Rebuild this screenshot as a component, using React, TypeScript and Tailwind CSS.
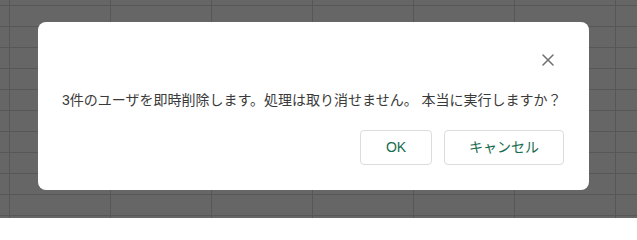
const font = "font-['Liberation_Sans','Noto_Sans_CJK_JP',sans-serif]";

const ConfirmDialog = () => {
  return (
    <div className={`flex h-[168px] w-[551px] flex-col rounded-lg bg-white px-6 ${font}`}>
      <div className="flex justify-end pr-[11px] pt-[32px]">
        <button className="text-[#6f6f6f]">
          <svg width="12" height="12" viewBox="0 0 12 12" fill="none" stroke="currentColor" strokeWidth="1.5" strokeLinecap="round">
            <path d="M1 1l10 10M11 1L1 11" />
          </svg>
        </button>
      </div>
      <p className="mt-[24px] text-[14px] leading-5 text-[#3a3a3a]">
        3件のユーザを即時削除します。処理は取り消せません。 本当に実行しますか？
      </p>
      <div className="mt-[20px] flex justify-end gap-3 pr-px">
        <button className="h-[35px] w-[72px] rounded-[4px] border border-[#dcdcdc] text-[14px] text-[#176b4d]">
          OK
        </button>
        <button className="h-[35px] w-[120px] rounded-[4px] border border-[#dcdcdc] text-[14px] text-[#176b4d]">
          キャンセル
        </button>
      </div>
    </div>
  );
};

export default function App() {
  return (
    <div className="h-[218px] w-[637px] overflow-hidden bg-[#666666] bg-[linear-gradient(to_right,#575757_1px,transparent_1px),linear-gradient(to_bottom,#575757_1px,transparent_1px)] bg-[size:101px_21px] bg-[position:9px_5px] pl-[38px] pt-[22px]">
      <ConfirmDialog />
    </div>
  );
}
